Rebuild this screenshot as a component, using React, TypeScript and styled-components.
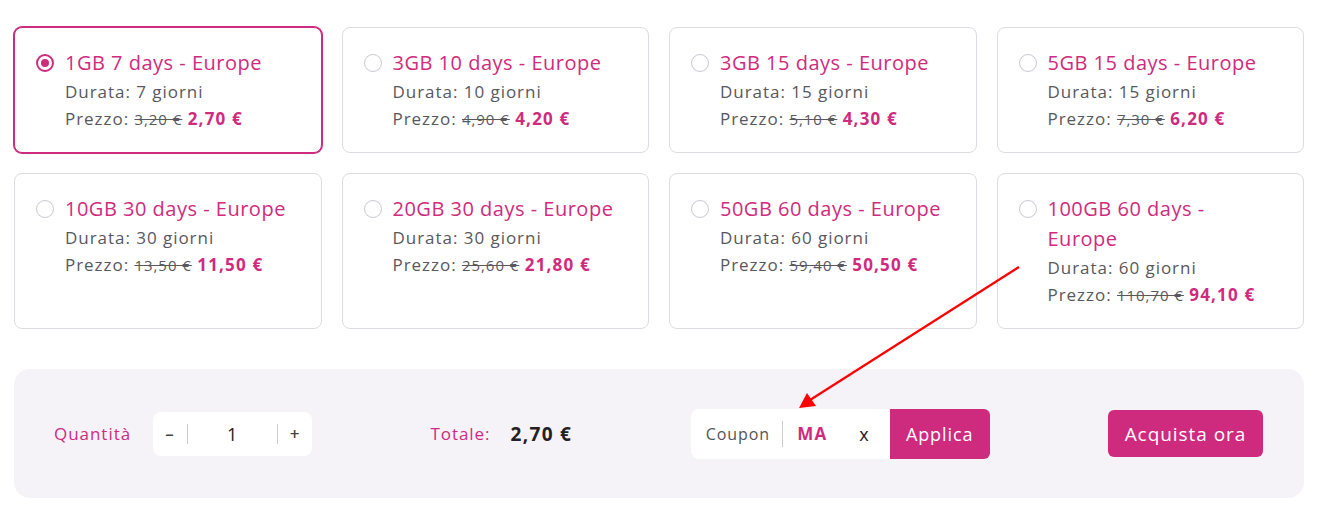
import React from "react";
import styled, { createGlobalStyle } from "styled-components";

const PINK = "#cf2b7e";

const Global = createGlobalStyle`
  html, body { margin: 0; padding: 0; background: #fff; }
  body { font-family: "Open Sans", "Liberation Sans", sans-serif; letter-spacing: 0.06em; }
`;

const Page = styled.div`
  position: relative;
  width: 1322px;
  height: 530px;
  box-sizing: border-box;
  padding: 27px 18px 0 14px;
`;

const Grid = styled.div`
  display: grid;
  grid-template-columns: repeat(4, 1fr);
  column-gap: 20px;
  row-gap: 20px;
`;

const Card = styled.label<{ $selected?: boolean }>`
  display: flex;
  align-items: flex-start;
  gap: 11px;
  box-sizing: border-box;
  padding: 20px 26px 20px 21px;
  border-radius: 8px;
  background: #fff;
  border: 1px solid ${(p) => (p.$selected ? PINK : "#dcdce2")};
  box-shadow: ${(p) => (p.$selected ? `0 0 0 1px ${PINK}` : "none")};
`;

const Radio = styled.span<{ $checked?: boolean }>`
  flex: none;
  width: 18px;
  height: 18px;
  margin-top: 6px;
  box-sizing: border-box;
  border-radius: 50%;
  border: ${(p) => (p.$checked ? `2px solid ${PINK}` : "1px solid #c9c9d0")};
  display: flex;
  align-items: center;
  justify-content: center;
  &::after {
    content: "";
    display: ${(p) => (p.$checked ? "block" : "none")};
    width: 8px;
    height: 8px;
    border-radius: 50%;
    background: ${PINK};
  }
`;

const Info = styled.div`
  display: flex;
  flex-direction: column;
  min-width: 0;
`;

const Title = styled.div`
  color: ${PINK};
  font-size: 20px;
  letter-spacing: 0.025em;
  line-height: 30px;
`;

const Line = styled.div`
  color: #58585d;
  font-size: 17px;
  line-height: 27px;
  height: 27px;
`;

const Old = styled.span`
  text-decoration: line-through;
  font-size: 15px;
  line-height: 1;
  color: #58585d;
`;

const New = styled.span`
  color: ${PINK};
  font-weight: 700;
  font-size: 17px;
  line-height: 1;
  letter-spacing: 0.07em;
`;

const Bar = styled.div`
  margin-top: 40px;
  height: 129px;
  background: #f5f3f8;
  border-radius: 16px;
  display: flex;
  align-items: center;
  justify-content: space-between;
  padding: 0 41px 0 40px;
`;

const Group = styled.div`
  display: flex;
  align-items: center;
`;

const Label = styled.span`
  color: ${PINK};
  font-size: 17px;
`;

const QtyBox = styled.div`
  margin-left: 22px;
  width: 159px;
  height: 44px;
  background: #fff;
  border-radius: 8px;
  display: flex;
  align-items: center;
`;

const QtyBtn = styled.span<{ $side: "l" | "r" }>`
  width: 34px;
  text-align: center;
  font-size: 17px;
  font-weight: 600;
  color: #444;
  line-height: 20px;
  border-${(p) => (p.$side === "l" ? "right" : "left")}: 1px solid #ccc;
`;

const QtyValue = styled.span`
  flex: 1;
  text-align: center;
  font-size: 18px;
  color: #222;
`;

const Total = styled.span`
  margin-left: 20px;
  font-weight: 700;
  font-size: 19px;
  letter-spacing: 0.07em;
  color: #222;
`;

const Coupon = styled.div`
  display: flex;
  align-items: stretch;
  height: 50px;
`;

const CouponField = styled.div`
  width: 199px;
  background: #fff;
  border-radius: 8px 0 0 8px;
  display: flex;
  align-items: center;
  padding-left: 15px;
  box-sizing: border-box;
`;

const CouponLabel = styled.span`
  font-size: 16px;
  color: #555;
  padding-right: 12px;
  border-right: 1px solid #ccc;
  line-height: 26px;
`;

const CouponInput = styled.input`
  margin-left: 14px;
  width: 29px;
  padding: 0;
  border: none;
  outline: none;
  background: transparent;
  font-family: inherit;
  letter-spacing: 0.07em;
  font-size: 17px;
  font-weight: 700;
  color: ${PINK};
`;

const Clear = styled.span`
  margin-left: 33px;
  font-size: 18px;
  color: #222;
`;

const ApplyBtn = styled.button`
  width: 100px;
  border: none;
  background: ${PINK};
  color: #fff;
  font-family: inherit;
  letter-spacing: 0.05em;
  font-size: 18px;
  border-radius: 0 6px 6px 0;
`;

const BuyBtn = styled.button`
  width: 155px;
  height: 47px;
  border: none;
  border-radius: 6px;
  background: ${PINK};
  color: #fff;
  font-family: inherit;
  letter-spacing: 0.05em;
  font-size: 19px;
`;

const Arrow = styled.svg`
  position: absolute;
  left: 0;
  top: 0;
  pointer-events: none;
`;

const plans = [
  { t: "1GB 7 days - Europe", d: 7, o: "3,20 €", n: "2,70 €" },
  { t: "3GB 10 days - Europe", d: 10, o: "4,90 €", n: "4,20 €" },
  { t: "3GB 15 days - Europe", d: 15, o: "5,10 €", n: "4,30 €" },
  { t: "5GB 15 days - Europe", d: 15, o: "7,30 €", n: "6,20 €" },
  { t: "10GB 30 days - Europe", d: 30, o: "13,50 €", n: "11,50 €" },
  { t: "20GB 30 days - Europe", d: 30, o: "25,60 €", n: "21,80 €" },
  { t: "50GB 60 days - Europe", d: 60, o: "59,40 €", n: "50,50 €" },
  { t: "100GB 60 days - Europe", d: 60, o: "110,70 €", n: "94,10 €" },
];

export default function App() {
  return (
    <Page>
      <Global />
      <Grid>
        {plans.map((p, i) => (
          <Card key={i} $selected={i === 0}>
            <Radio $checked={i === 0} />
            <Info>
              <Title>{p.t}</Title>
              <Line>Durata: {p.d} giorni</Line>
              <Line>
                Prezzo: <Old>{p.o}</Old> <New>{p.n}</New>
              </Line>
            </Info>
          </Card>
        ))}
      </Grid>
      <Bar>
        <Group>
          <Label>Quantità</Label>
          <QtyBox>
            <QtyBtn $side="l">–</QtyBtn>
            <QtyValue>1</QtyValue>
            <QtyBtn $side="r">+</QtyBtn>
          </QtyBox>
        </Group>
        <Group>
          <Label>Totale:</Label>
          <Total>2,70 €</Total>
        </Group>
        <Coupon>
          <CouponField>
            <CouponLabel>Coupon</CouponLabel>
            <CouponInput readOnly value="MAGGIO" />
            <Clear>x</Clear>
          </CouponField>
          <ApplyBtn>Applica</ApplyBtn>
        </Coupon>
        <BuyBtn>Acquista ora</BuyBtn>
      </Bar>
      <Arrow width="1322" height="530" viewBox="0 0 1322 530">
        <line x1="1019" y1="267" x2="810" y2="400" stroke="#f00" strokeWidth="2.2" />
        <polygon points="799,408 807,393 816,406" fill="#f00" />
      </Arrow>
    </Page>
  );
}
